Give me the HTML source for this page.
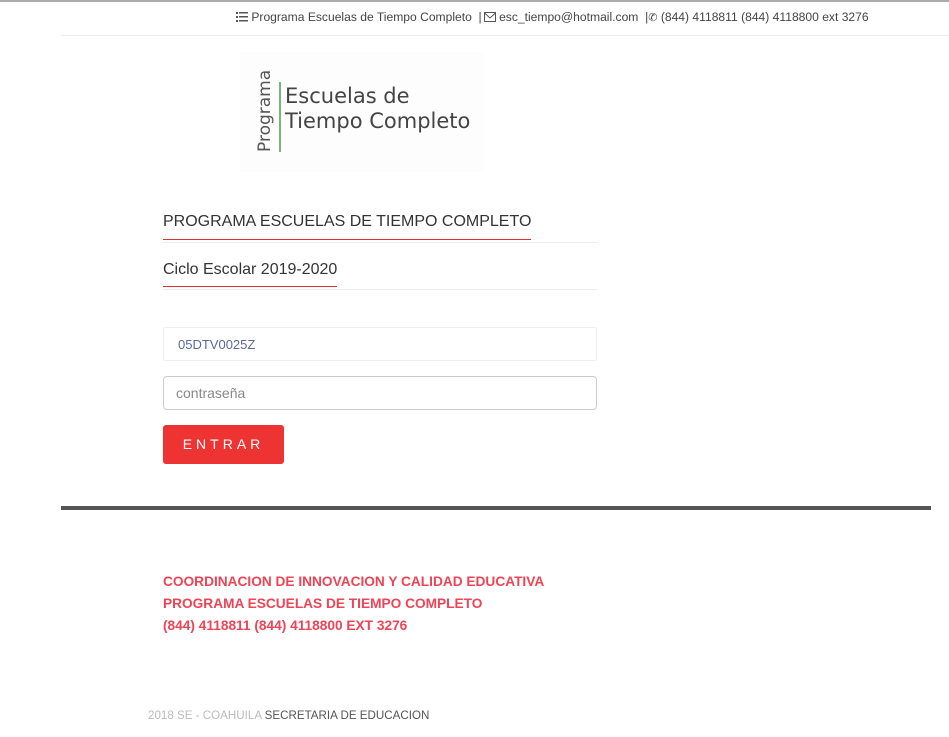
<!DOCTYPE html>
<html><head><meta charset="utf-8"><style>
body{margin:0;width:949px;height:737px;background:#fff;font-family:"Liberation Sans",sans-serif;position:relative;overflow:hidden}
.a{position:absolute}
</style></head><body>
<div class="a" style="left:0;top:0;width:949px;height:2px;background:#aaa"></div>
<div class="a" style="left:236px;top:10px;font-size:12.1px;color:#444;white-space:nowrap">
<svg width="12" height="10" viewBox="0 0 12 10" style="vertical-align:-1px"><g fill="#555"><rect x="0" y="0" width="2" height="2"/><rect x="0" y="4" width="2" height="2"/><rect x="0" y="8" width="2" height="2"/><rect x="3" y="0" width="9" height="1.5"/><rect x="3" y="4" width="9" height="1.5"/><rect x="3" y="8" width="9" height="1.5"/></g></svg> Programa Escuelas de Tiempo Completo &nbsp;|<svg width="12" height="10" viewBox="0 0 12 10" style="vertical-align:-1px;margin-left:2px"><rect x="0.5" y="0.5" width="11" height="9" fill="none" stroke="#555"/><path d="M0.5 1 L6 6 L11.5 1" fill="none" stroke="#555"/></svg> esc_tiempo@hotmail.com &nbsp;|<span style="font-size:11px">&#9990;</span> (844) 4118811 (844) 4118800 ext 3276</div>
<div class="a" style="left:61px;top:35px;width:888px;height:1px;background:#eee"></div>
<div class="a" style="left:240px;top:52px;width:245px;height:120px;background:#fdfdfd"></div>
<div class="a" style="left:255px;top:152px;transform:rotate(-90deg);transform-origin:0 0;font-size:17px;color:#555;font-family:'DejaVu Sans',sans-serif">Programa</div>
<div class="a" style="left:279px;top:82px;width:2px;height:70px;background:#7cb27c"></div>
<div class="a" style="left:285px;top:84px;font-size:21px;line-height:25px;color:#444;font-family:'DejaVu Sans',sans-serif">Escuelas de<br>Tiempo Completo</div>
<div class="a" style="left:163px;top:213px;font-size:16px;color:#333">PROGRAMA ESCUELAS DE TIEMPO COMPLETO</div>
<div class="a" style="left:163px;top:239px;width:368px;height:1px;background:#d33"></div>
<div class="a" style="left:163px;top:242px;width:434px;height:1px;background:#eee"></div>
<div class="a" style="left:163px;top:261px;font-size:16px;color:#333">Ciclo Escolar 2019-2020</div>
<div class="a" style="left:163px;top:286px;width:174px;height:1px;background:#d33"></div>
<div class="a" style="left:163px;top:289px;width:434px;height:1px;background:#eee"></div>
<div class="a" style="left:163px;top:327px;width:432px;height:32px;border:1px solid #eee;border-radius:3px"></div>
<div class="a" style="left:178px;top:337px;font-size:13px;color:#5a6aa0">05DTV0025Z</div>
<div class="a" style="left:163px;top:376px;width:432px;height:32px;border:1px solid #ccc;border-radius:4px"></div>
<div class="a" style="left:176px;top:385px;font-size:14px;color:#888">contraseña</div>
<div class="a" style="left:163px;top:425px;width:121px;height:39px;background:#ee3333;border-radius:3px;color:#fff;font-size:14px;letter-spacing:4px;text-align:center;line-height:39px">ENTRAR</div>
<div class="a" style="left:61px;top:506px;width:870px;height:4px;background:#555"></div>
<div class="a" style="left:163px;top:571px;font-size:13.7px;line-height:22px;font-weight:bold;color:#ee4455;white-space:nowrap">COORDINACION DE INNOVACION Y CALIDAD EDUCATIVA<br>PROGRAMA ESCUELAS DE TIEMPO COMPLETO<br>(844) 4118811 (844) 4118800 EXT 3276</div>
<div class="a" style="left:148px;top:709px;font-size:11.6px;color:#bbb;white-space:nowrap">2018 SE - COAHUILA <span style="color:#555">SECRETARIA DE EDUCACION</span></div>
</body></html>
